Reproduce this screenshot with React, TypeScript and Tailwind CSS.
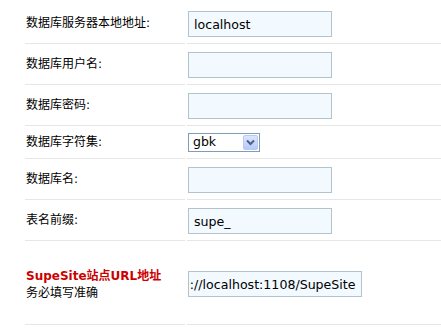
import React, { useEffect, useRef } from 'react';

const labelFont = { fontFamily: '"DejaVu Sans", "Noto Sans CJK SC", sans-serif' };

const TextBox = ({ value = '', wide = false, scrollEnd = false }: { value?: string; wide?: boolean; scrollEnd?: boolean }) => {
  const ref = useRef<HTMLInputElement>(null);

  useEffect(() => {
    if (scrollEnd && ref.current) ref.current.scrollLeft = 9999;
  }, [scrollEnd]);

  return (
    <input
      ref={ref}
      type="text"
      defaultValue={value}
      className={`${wide ? 'w-[174px] pl-[1px] pr-[5px]' : 'w-[144px] pl-[5px] pr-[6px]'} h-[26px] border border-[#b3c3cc] bg-[#f2faff] text-[12.6px] text-black outline-none`}
      style={{ fontFamily: '"DejaVu Sans", sans-serif' }}
    />
  );
};

const Row = ({ label, children, pad = 'pt-[8px] pb-[6px]' }: { label: React.ReactNode; children: React.ReactNode; pad?: string }) => (
  <div className="flex gap-[2px]">
    <div className="w-[160px] border-b border-[#e6e6e6] flex items-center pl-[1px] text-[12px] text-black" style={labelFont}>
      {label}
    </div>
    <div className={`flex-1 border-b border-[#e6e6e6] pl-[1px] flex items-center ${pad}`}>{children}</div>
  </div>
);

export default function App() {
  return (
    <div className="w-[441px] h-[329px] bg-white overflow-hidden pl-[25px] pt-[3px]">
      <Row label="数据库服务器本地地址:">
        <TextBox value="localhost" />
      </Row>
      <Row label="数据库用户名:">
        <TextBox />
      </Row>
      <Row label="数据库密码:">
        <TextBox />
      </Row>
      <Row label="数据库字符集:" pad="pt-[7px] pb-[6px]">
        <div className="w-[72px] h-[19px] border border-[#7f9db9] bg-white flex items-center justify-between pl-[4px] pr-[1px]">
          <span className="text-[12.5px] text-black leading-none" style={{ fontFamily: '"DejaVu Sans", sans-serif' }}>
            gbk
          </span>
          <span className="w-[15px] h-[15px] rounded-[2px] border border-[#b9c9f0] bg-gradient-to-b from-[#dce6fd] to-[#b6c9fa] flex items-center justify-center">
            <svg width="9" height="7" viewBox="0 0 9 7">
              <path d="M1 1.5 L4.5 5 L8 1.5" fill="none" stroke="#4d6185" strokeWidth="2" />
            </svg>
          </span>
        </div>
      </Row>
      <Row label="数据库名:">
        <TextBox />
      </Row>
      <Row label="表名前缀:">
        <TextBox value="supe_" />
      </Row>
      <Row
        pad="pt-[30px] pb-[27px]"
        label={
          <div className="leading-[17px] mt-[5px]">
            <div className="font-bold text-[#cc0000]">SupeSite站点URL地址</div>
            <div>务必填写准确</div>
          </div>
        }
      >
        <TextBox value="http://localhost:1108/SupeSite" wide scrollEnd />
      </Row>
    </div>
  );
}
